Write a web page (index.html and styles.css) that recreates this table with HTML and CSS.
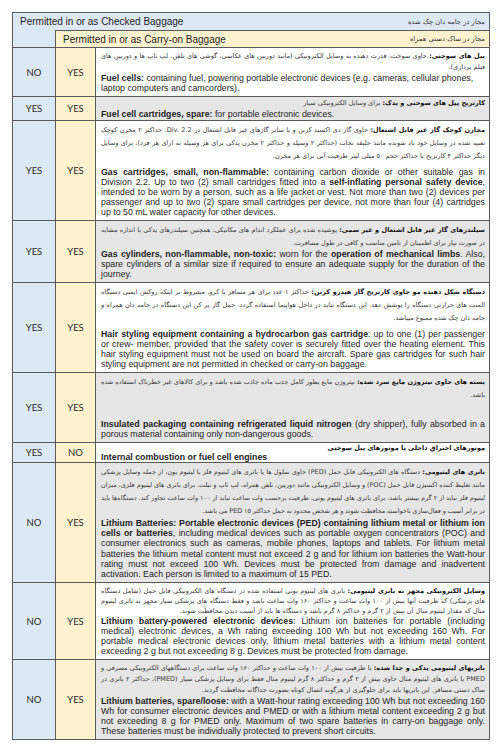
FILE: index.html
```html
<!DOCTYPE html>
<html lang="en">
<head>
<meta charset="utf-8">
<title>Permitted baggage</title>
<link rel="stylesheet" href="styles.css">
</head>
<body>
<div class="sheet">
  <div class="h1">
    <span class="h-en">Permitted in or as Checked Baggage</span>
    <span class="h-fa" dir="rtl">مجاز در جامه دان چک شده</span>
  </div>
  <div class="hcorner"></div>
  <div class="h2">
    <span class="h-en">Permitted in or as Carry-on Baggage</span>
    <span class="h-fa" dir="rtl">مجاز در ساک دستی همراه</span>
  </div>

  <div class="lab blue">NO</div><div class="lab yel">YES</div>
  <div class="txt white r-fuel">
    <p class="fa" dir="rtl"><b>پیل های سوختی:</b> حاوی سوخت، قدرت دهنده به وسایل الکترونیکی (مانند دوربین های عکاسی، گوشی های تلفن، لپ تاپ ها و دوربین های فیلم برداری).</p>
    <p class="en left"><b>Fuel cells:</b> containing fuel, powering portable electronic devices (e.g. cameras, cellular phones, laptop computers and camcorders).</p>
  </div>

  <div class="lab blue">YES</div><div class="lab yel">YES</div>
  <div class="txt gray r-single">
    <p class="fa" dir="rtl"><b>کارتریج پیل های سوختی و یدک:</b> برای وسایل الکترونیکی سیار</p>
    <p class="en"><b>Fuel cell cartridges, spare:</b> for portable electronic devices.</p>
  </div>

  <div class="lab blue">YES</div><div class="lab yel">YES</div>
  <div class="txt white r-gap">
    <p class="fa" dir="rtl"><b>مخازن کوچک گاز غیر قابل اشتعال:</b> حاوی گاز دی اکسید کربن و یا سایر گازهای غیر قابل اشتعال در Div. 2.2. حداکثر ۲ مخزن کوچک تعبیه شده در وسایل خود باد شونده مانند جلیقه نجات (حداکثر ۲ وسیله و حداکثر ۲ مخزن یدکی برای هر وسیله به ازای هر فرد)، برای وسایل دیگر حداکثر ۴ کارتریج با حداکثر حجم ۵۰ میلی لیتر ظرفیت آبی برای هر مخزن.</p>
    <p class="en"><b>Gas cartridges, small, non-flammable:</b> containing carbon dioxide or other suitable gas in Division 2.2. Up to two (2) small cartridges fitted into a <b>self-inflating personal safety device</b>, intended to be worn by a person, such as a life jacket or vest. Not more than two (2) devices per passenger and up to two (2) spare small cartridges per device, not more than four (4) cartridges up to 50 mL water capacity for other devices.</p>
  </div>

  <div class="lab blue">YES</div><div class="lab yel">YES</div>
  <div class="txt gray r-limbs">
    <p class="fa" dir="rtl"><b>سیلندرهای گاز غیر قابل اشتعال و غیر سمی:</b> پوشیده شده برای عملکرد اندام های مکانیکی، همچنین سیلندرهای یدکی با اندازه مشابه در صورت نیاز برای اطمینان از تامین مناسب و کافی در طول مسافرت.</p>
    <p class="en"><b>Gas cylinders, non-flammable, non-toxic:</b> worn for the <b>operation of mechanical limbs</b>. Also, spare cylinders of a similar size if required to ensure an adequate supply for the duration of the journey.</p>
  </div>

  <div class="lab blue">YES</div><div class="lab yel">YES</div>
  <div class="txt white r-gap">
    <p class="fa" dir="rtl"><b>دستگاه شکل دهنده مو حاوی کارتریج گاز هیدرو کربن:</b> حداکثر ۱ عدد برای هر مسافر یا کرو، مشروط بر اینکه روکش ایمنی دستگاه المنت های حرارتی دستگاه را پوشش دهد. این دستگاه نباید در داخل هواپیما استفاده گردد. حمل گاز پر کن این دستگاه در جامه دان همراه و جامه دان چک شده ممنوع میباشد.</p>
    <p class="en"><b>Hair styling equipment containing a hydrocarbon gas cartridge</b>: up to one (1) per passenger or crew- member, provided that the safety cover is securely fitted over the heating element. This hair styling equipment must not be used on board the aircraft. Spare gas cartridges for such hair styling equipment are not permitted in checked or carry-on baggage.</p>
  </div>

  <div class="lab blue">YES</div><div class="lab yel">YES</div>
  <div class="txt gray r-wide">
    <p class="fa" dir="rtl"><b>بسته های حاوی نیتروژن مایع سرد شده:</b> نیتروژن مایع بطور کامل جذب ماده جاذب شده باشد و برای کالاهای غیر خطرناک استفاده شده باشد.</p>
    <p class="en"><b>Insulated packaging containing refrigerated liquid nitrogen</b> (dry shipper), fully absorbed in a porous material containing only non-dangerous goods.</p>
  </div>

  <div class="lab blue">YES</div><div class="lab yel">NO</div>
  <div class="txt white r-single r-engine">
    <p class="fa" dir="rtl"><b>موتورهای احتراق داخلی یا موتورهای پیل سوختی</b></p>
    <p class="en"><b>Internal combustion or fuel cell engines</b></p>
  </div>

  <div class="lab blue">NO</div><div class="lab yel">YES</div>
  <div class="txt gray r-ped">
    <p class="fa" dir="rtl"><b>باتری های لیتیومی:</b> دستگاه های الکترونیکی قابل حمل (PED) حاوی سلول ها یا باتری های لیتیوم فلز یا لیتیوم یون، از جمله وسایل پزشکی مانند تغلیظ کننده اکسیژن قابل حمل (POC) و وسایل الکترونیکی مانند دوربین، تلفن همراه، لپ تاپ و تبلت. برای باتری های لیتیوم فلزی، میزان لیتیوم فلز نباید از ۲ گرم بیشتر باشد، برای باتری های لیتیوم یونی، ظرفیت برحسب وات ساعت نباید از ۱۰۰ وات ساعت تجاوز کند. دستگاه‌ها باید در برابر آسیب و فعال‌سازی ناخواسته محافظت شوند و هر شخص محدود به حمل حداکثر ۱۵ PED می باشد.</p>
    <p class="en"><b>Lithium Batteries: Portable electronic devices (PED) containing lithium metal or lithium ion cells or batteries</b>, including medical devices such as portable oxygen concentrators (POC) and consumer electronics such as cameras, mobile phones, laptops and tablets. For lithium metal batteries the lithium metal content must not exceed 2 g and for lithium ion batteries the Watt-hour rating must not exceed 100 Wh. Devices must be protected from damage and inadvertent activation. Each person is limited to a maximum of 15 PED.</p>
  </div>

  <div class="lab blue">NO</div><div class="lab yel">YES</div>
  <div class="txt white r-dense">
    <p class="fa" dir="rtl"><b>وسایل الکترونیکی مجهز به باتری لیتیومی:</b> باتری های لیتیوم یونی استفاده شده در دستگاه های الکترونیکی قابل حمل (شامل دستگاه های پزشکی) که ظرفیت آنها بیش از ۱۰۰ وات ساعت و حداکثر ۱۶۰ وات ساعت باشد و فقط دستگاه های پزشکی سیار مجهز به باتری لیتیوم متال که مقدار لیتیوم متال آن بیش از ۲ گرم و حداکثر ۸ گرم باشد و دستگاه ها باید از آسیب دیدن محافظت شوند.</p>
    <p class="en"><b>Lithium battery-powered electronic devices</b>: Lithium ion batteries for portable (including medical) electronic devices, a Wh rating exceeding 100 Wh but not exceeding 160 Wh. For portable medical electronic devices only, lithium metal batteries with a lithium metal content exceeding 2 g but not exceeding 8 g. Devices must be protected from damage.</p>
  </div>

  <div class="lab blue">NO</div><div class="lab yel">YES</div>
  <div class="txt gray r-spare">
    <p class="fa" dir="rtl"><b>باتریهای لیتیومی یدکی و جدا شده:</b> با ظرفیت بیش از ۱۰۰ وات ساعت و حداکثر ۱۶۰ وات ساعت برای دستگاههای الکترونیکی مصرفی و PMED یا باتری های لیتیوم متال حاوی بیش از ۲ گرم و حداکثر ۸ گرم لیتیوم متال فقط برای وسایل پزشکی سیار (PMED)، حداکثر ۲ باتری در ساک دستی مسافر. این باتریها باید برای جلوگیری از هرگونه اتصال کوتاه بصورت جداگانه محافظت گردند.</p>
    <p class="en"><b>Lithium batteries, spare/loose:</b> with a Watt-hour rating exceeding 100 Wh but not exceeding 160 Wh for consumer electronic devices and PMED or with a lithium metal content exceeding 2 g but not exceeding 8 g for PMED only. Maximum of two spare batteries in carry-on baggage only. These batteries must be individually protected to prevent short circuits.</p>
  </div>
</div>
</body>
</html>
```

FILE: styles.css
```css
html, body {
  margin: 0;
  padding: 0;
  background: #ffffff;
}

body {
  font-family: "Liberation Sans", Arial, sans-serif;
  color: #1a1a1a;
}

.sheet {
  margin: 12px 0 0 12px;
  width: 478px;
  display: grid;
  grid-template-columns: 43px 40px 1fr;
  border-top: 1px solid #5a5a5a;
  border-left: 1px solid #5a5a5a;
  box-sizing: border-box;
}

.sheet > div {
  box-sizing: border-box;
  border-right: 1px solid #5a5a5a;
  border-bottom: 1px solid #5a5a5a;
}

.h1 {
  grid-column: 1 / 4;
  background: #dde8f5;
  border-bottom: none !important;
  display: flex;
  justify-content: space-between;
  align-items: center;
  height: 17px;
  padding: 0 4px 0 7px;
}

.hcorner {
  background: #dde8f5;
}

.h2 {
  grid-column: 2 / 4;
  background: #fef2cf;
  border-top: 1px solid #5a5a5a;
  display: flex;
  justify-content: space-between;
  align-items: center;
  height: 18px;
  padding: 0 4px 0 7px;
}

.h-en {
  font-size: 10px;
  color: #1f1f1f;
}

.h-fa {
  font-family: "DejaVu Sans", sans-serif;
  font-size: 6.8px;
  color: #333;
}

.lab {
  display: flex;
  align-items: center;
  justify-content: center;
  font-family: Lato, "Open Sans", sans-serif;
  font-size: 9.5px;
  color: #2a2a2a;
}

.blue { background: #dde8f5; }
.yel { background: #fef2cf; }
.white { background: #ffffff; }
.gray { background: #e6e6e6; }

/* text cell; per-row spacing set through custom properties */
.txt {
  --fa-lh: 13px;
  --en-lh: 10px;
  --gap: 0px;
  padding: 3px 4px 3px 5px;
}

.txt p {
  margin: 0;
}

.fa {
  font-family: "DejaVu Sans", sans-serif;
  font-size: 6.5px;
  line-height: var(--fa-lh);
  margin-bottom: var(--gap) !important;
  text-align: justify;
  color: #3a3a3a;
}

.fa b {
  color: #111;
}

.en {
  font-size: 8.8px;
  line-height: var(--en-lh);
  text-align: justify;
  color: #1e1e1e;
}

.en.left {
  text-align: left;
}

.r-fuel {
  --fa-lh: 11px;
}

.r-single {
  --fa-lh: 11px;
  padding-top: 1px;
  padding-bottom: 1px;
}

.r-engine {
  --fa-lh: 10px;
  --en-lh: 9px;
  padding-top: 0;
  padding-bottom: 0;
}

.r-gap {
  --gap: 4px;
}

.r-limbs {
  --fa-lh: 12.5px;
}

.r-wide {
  --gap: 17px;
}

.r-ped {
  --fa-lh: 13px;
  --en-lh: 10.2px;
}

.r-ped .fa {
  word-spacing: -0.4px;
}

.r-dense {
  --fa-lh: 10px;
}

.r-spare {
  --fa-lh: 11px;
  --en-lh: 10px;
}
```
